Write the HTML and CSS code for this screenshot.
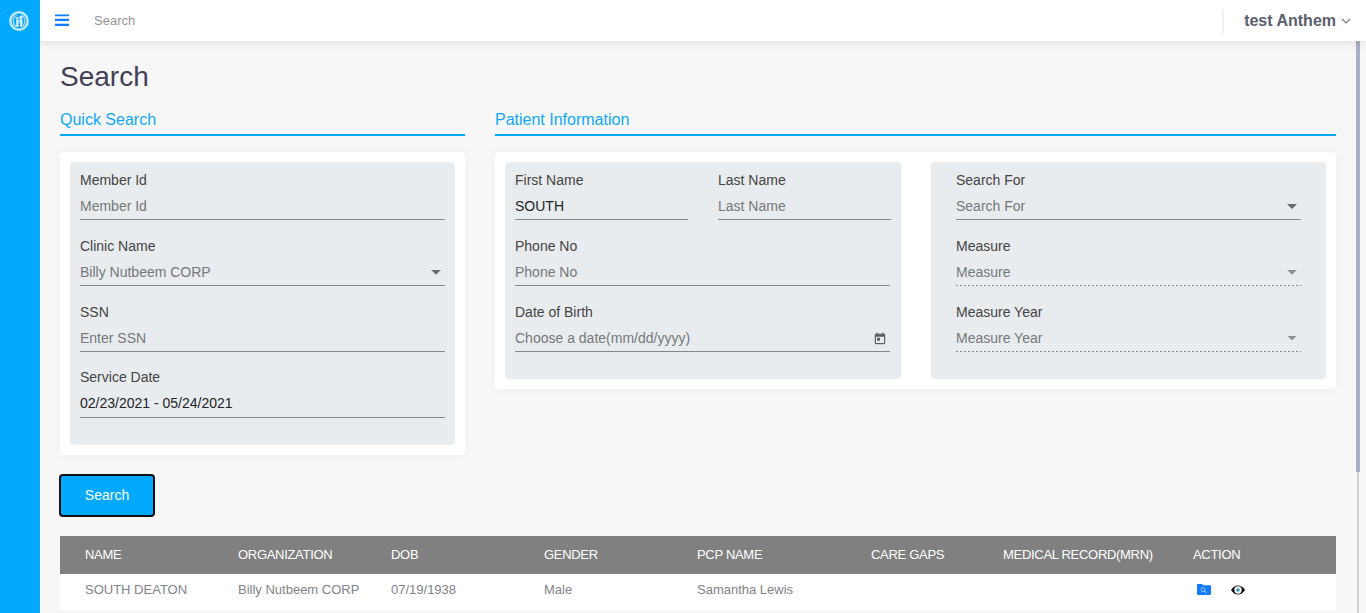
FILE: index.html
```html
<!DOCTYPE html>
<html lang="en">
<head>
<meta charset="utf-8">
<title>Search</title>
<link rel="stylesheet" href="styles.css">
</head>
<body>
<div class="app">
  <aside class="sidebar">
    <svg class="logo" width="20" height="20" viewBox="0 0 20 20">
      <circle cx="10" cy="10" r="8.7" fill="#0ba5f2" stroke="#c3e9fc" stroke-width="2.4"/>
      <path d="M7.6 4.4Q4 6.4 4.2 10.2T7 15.4M12.6 4.2q3.4 2 3.3 5.8t-2.6 5.2" fill="none" stroke="#a5defb" stroke-width="1.3"/>
      <circle cx="8.4" cy="7.4" r="1.3" fill="#d9f2fe"/>
      <circle cx="11.9" cy="6.3" r="1.6" fill="#d9f2fe"/>
      <path d="M7.2 9h2.3v7H7.2zM10.5 8.2h3v4.2h-.3v3.4h-2.1v-3.4h-.6z" fill="#d9f2fe"/>
    </svg>
  </aside>
  <div class="main">
    <header class="topbar">
      <svg class="menu" width="14" height="12" viewBox="0 0 14 12"><path d="M0 .4h14v1.9H0zM0 5h14v2H0zM0 10h14v2H0z" fill="#0a7cff"/><path d="M0 4.6h14V5H0zM0 9.4h14v.6H0z" fill="#8cc0ff"/></svg>
      <span class="crumb">Search</span>
      <div class="user">
        <span>test Anthem</span>
        <svg width="10" height="6" viewBox="0 0 10 6"><path d="M1 1l4 4 4-4" fill="none" stroke="#74788a" stroke-width="1.1"/></svg>
      </div>
    </header>
    <main class="content">
      <h1 class="title">Search</h1>
      <div class="sections">
        <section class="quick">
          <h2 class="heading">Quick Search</h2>
          <div class="card">
            <div class="panel">
              <div class="field"><div class="label">Member Id</div><div class="value">Member Id</div></div>
              <div class="field"><div class="label">Clinic Name</div><div class="value">Billy Nutbeem CORP<i class="caret"></i></div></div>
              <div class="field"><div class="label">SSN</div><div class="value">Enter SSN</div></div>
              <div class="field"><div class="label">Service Date</div><div class="value filled">02/23/2021 - 05/24/2021</div></div>
            </div>
          </div>
        </section>
        <section class="patient">
          <h2 class="heading">Patient Information</h2>
          <div class="card split">
            <div class="panel contact">
              <div class="pair">
                <div class="field"><div class="label">First Name</div><div class="value filled">SOUTH</div></div>
                <div class="field"><div class="label">Last Name</div><div class="value">Last Name</div></div>
              </div>
              <div class="field"><div class="label">Phone No</div><div class="value">Phone No</div></div>
              <div class="field"><div class="label">Date of Birth</div><div class="value">Choose a date(mm/dd/yyyy)
                <svg class="calendar" width="14" height="14" viewBox="0 0 24 24"><path d="M19 3h-1V1h-2v2H8V1H6v2H5c-1.11 0-1.99.9-1.99 2L3 19c0 1.1.89 2 2 2h14c1.1 0 2-.9 2-2V5c0-1.1-.9-2-2-2zm0 16H5V8h14v11zM7 10h5v5H7z" fill="#5d6063"/></svg>
              </div></div>
            </div>
            <div class="panel inset">
              <div class="field"><div class="label">Search For</div><div class="value">Search For<i class="caret"></i></div></div>
              <div class="field"><div class="label">Measure</div><div class="value disabled">Measure<i class="caret"></i></div></div>
              <div class="field"><div class="label">Measure Year</div><div class="value disabled">Measure Year<i class="caret"></i></div></div>
            </div>
          </div>
        </section>
      </div>
      <button class="search-button">Search</button>
      <div class="table">
        <div class="row head"><span>NAME</span><span>ORGANIZATION</span><span>DOB</span><span>GENDER</span><span>PCP NAME</span><span>CARE GAPS</span><span>MEDICAL RECORD(MRN)</span><span>ACTION</span></div>
        <div class="row"><span>SOUTH DEATON</span><span>Billy Nutbeem CORP</span><span>07/19/1938</span><span>Male</span><span>Samantha Lewis</span><span></span><span></span>
          <span class="actions">
            <svg width="14" height="11" viewBox="0 0 14 11"><path d="M1 0h4l1.5 1.2H13q1 0 1 1V10q0 1-1 1H1q-1 0-1-1V1q0-1 1-1z" fill="#147bff"/><circle cx="6" cy="5.6" r="2" fill="none" stroke="#8fc4ff"/><path d="M7.5 7l2 2" stroke="#8fc4ff" stroke-width="1.1"/></svg>
            <svg width="14" height="10" viewBox="0 0 14 10"><path d="M0 5Q3 .4 7 .4T14 5Q11 9.6 7 9.6T0 5z" fill="#050505"/><circle cx="7" cy="5" r="3.7" fill="#fff"/><circle cx="7" cy="5" r="1.8" fill="#2b8fd0"/></svg>
          </span>
        </div>
      </div>
      <div class="scrollbar"><div class="thumb"></div></div>
    </main>
  </div>
</div>
</body>
</html>
```
FILE: styles.css
```css
* { box-sizing: border-box; }
body { margin: 0; overflow: hidden; font-family: "Liberation Sans", Arial, sans-serif; font-size: 14px; }
.app { display: flex; height: 613px; background: #f7f7f7; }
.sidebar { width: 40px; flex: none; background: #03a9fc; padding: 11px 0 0 9px; z-index: 2; }
.logo { display: block; }
.main { flex: 1; min-width: 0; display: flex; flex-direction: column; }
.topbar { height: 41px; flex: none; display: flex; align-items: center; padding: 0 15px; background: #fff; box-shadow: 0 1px 9px rgba(0, 0, 0, .12); z-index: 1; }
.menu { margin-top: -2px; }
.crumb { margin-left: 25px; font-size: 13px; color: #959595; }
.user { margin-left: auto; height: 24px; margin-top: 1px; padding-left: 20px; border-left: 2px solid #f0f1f7; display: flex; align-items: center; gap: 5px; font-size: 16px; font-weight: bold; color: #595d6e; }
.user span { margin-top: -1px; }
.user svg { margin-top: -1px; }
.content { flex: 1; min-height: 0; overflow: hidden; position: relative; padding: 20px 30px 0 20px; }
.title { margin: 0; font-size: 28px; line-height: 32px; font-weight: normal; color: #434056; }
.sections { display: grid; grid-template-columns: 405px 841px; gap: 30px; align-items: start; margin-top: 15px; }
.heading { margin: 0 0 16px; height: 28px; font-size: 16px; line-height: 24px; font-weight: normal; color: #10a8f8; border-bottom: 2px solid #03a9f4; }
.card { padding: 10px; background: #fff; border-radius: 4px; box-shadow: 0 0 13px rgba(82, 63, 105, .04); }
.panel { background: #e8ecef; border-radius: 4px; padding: 8.1px 10px 11.9px; }
.contact { padding-right: 11px; }
.split { display: grid; grid-template-columns: 396px 395px; gap: 30px; }
.inset { padding-left: 25px; padding-right: 25px; }
.pair { display: grid; grid-template-columns: 173px 173px; gap: 30px; }
.field { height: 65.75px; }
.label { height: 20px; line-height: 20px; color: #444; }
.value { height: 30.3px; padding: 6px 4px 0 0; line-height: 20px; color: #75787b; border-bottom: 1px solid #85898c; display: flex; justify-content: space-between; }
.filled { color: #212428; }
.caret { width: 10px; height: 5px; margin-top: 8px; background: #66696b; clip-path: polygon(0 0, 100% 0, 50% 100%); }
.disabled { border-bottom: 0; background: repeating-linear-gradient(90deg, #85898c 0 2px, transparent 2px 4px) 0 100% / 100% 1px no-repeat; }
.disabled .caret { background: #8d9193; }
.calendar { margin: 4px -1px 0 0; }
.search-button { display: block; width: 96px; height: 43px; margin: 19px 0 0 -1px; padding: 0; border: 2px solid #101010; border-radius: 4px; background: #03a9fc; color: #fff; font: 14px "Liberation Sans", Arial, sans-serif; }
.table { margin-top: 19px; background: #fff; }
.row { display: grid; grid-template-columns: 153px 153px 153px 153px 174px 132px 190px 1fr; padding-left: 25px; height: 36px; line-height: 31px; font-size: 13px; color: #828289; }
.head { height: 38px; line-height: 37px; background: #808080; color: #fff; letter-spacing: -.3px; }
.actions { display: flex; align-items: center; gap: 20px; padding-left: 4px; height: 32px; }
.scrollbar { position: absolute; top: 0; right: 6px; width: 4px; height: 100%; background: linear-gradient(90deg, transparent 1px, #d0d0d0 1px 3px, transparent 3px); }
.thumb { height: 431px; background: #aab0c3; }
```
